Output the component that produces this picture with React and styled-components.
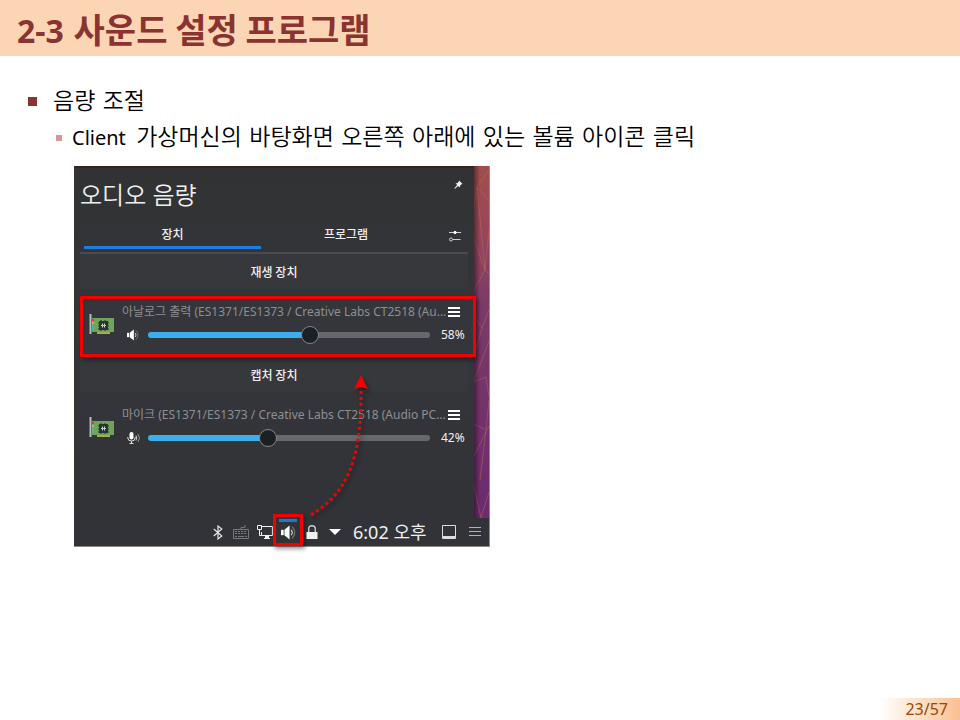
import React, { useState } from "react";
import styled, { createGlobalStyle } from "styled-components";

const GlobalStyle = createGlobalStyle`
  * { box-sizing: border-box; }
  body {
    margin: 0;
    background: #fff;
    font-family: "Noto Sans", "Noto Sans CJK KR", sans-serif;
  }
  button { border: 0; padding: 0; background: none; color: inherit; font: inherit; cursor: pointer; }
`;

const Slide = styled.div`
  min-height: 100vh;
  display: flex;
  flex-direction: column;
`;

const SlideHeader = styled.header`
  background: #fcd5b5;
  padding: 5px 17px 3px;
`;

const SlideTitle = styled.h1`
  margin: 0;
  color: #8b3331;
  font-family: "Noto Sans CJK KR", sans-serif;
  font-size: 34px;
  line-height: 48px;
  font-weight: 700;
`;

const SlideNumber = styled.span`
  margin-right: 2px;
  font-family: "Noto Sans", sans-serif;
  font-size: 32px;
  line-height: 1;
`;

const Outline = styled.main`
  flex: 1;
  padding: 27px 28px 16px;
  color: #000;
`;

const Topic = styled.h2`
  margin: 0;
  display: flex;
  align-items: center;
  gap: 16px;
  font-family: "DejaVu Sans", "Noto Sans CJK KR", sans-serif;
  font-size: 23px;
  line-height: 36px;
  font-weight: 350;
`;

const Point = styled.p`
  margin: 0;
  padding-left: 28px;
  display: flex;
  align-items: center;
  gap: 10px;
  font-family: "DejaVu Sans", "Noto Sans CJK KR", sans-serif;
  font-size: 23px;
  line-height: 36px;
  font-weight: 350;
`;

const Bullet = styled.span`
  flex: none;
  width: ${(p) => (p.$minor ? 6 : 9)}px;
  height: ${(p) => (p.$minor ? 6 : 9)}px;
  background: ${(p) => (p.$minor ? "#d99694" : "#8b3331")};
`;

const Latin = styled.span`
  margin-right: 3px;
  font-family: "Noto Sans", sans-serif;
  font-size: 20px;
  font-weight: 400;
`;

const Desktop = styled.section`
  position: relative;
  width: 416px;
  max-width: 100%;
  margin: 10px 0 0 46px;
  border: solid #8c8c8c;
  border-width: 0 1px 1px 0;
  background: #323336;
  color: #eff0f1;
`;

const Workspace = styled.div`
  display: grid;
  grid-template-columns: 1fr 15px;
  height: 352px;
`;

const Applet = styled.div`
  padding: 0 6px 0 4px;
  border: solid;
  border-width: 2px 0 0 2px;
  border-color: #35241d #35241d #35241d #3b302c;
  background: linear-gradient(#303233, #35363b 45%, #323337);
`;

const AppletHeader = styled.div`
  display: flex;
  justify-content: space-between;
  align-items: flex-start;
  height: 52px;
  padding-top: 9px;
`;

const AppletTitle = styled.h3`
  margin: 0;
  font-size: 24px;
  line-height: 36px;
  font-weight: 350;
`;

const PinButton = styled.button`
  display: flex;
  width: 20px;
  height: 14px;
  justify-content: center;
  align-items: center;
`;

const TabBar = styled.div`
  display: grid;
  grid-template-columns: 25fr 24fr 37px;
  height: 34px;
  padding-left: 4px;
  border-bottom: 2px solid #4a4b4e;
`;

const Tab = styled.button`
  display: flex;
  align-items: center;
  justify-content: center;
  height: 29px;
  padding-top: 2px;
  border-bottom: 3px solid ${(p) => (p.$active ? "#1d80e0" : "transparent")};
  font-size: 12px;
  line-height: 16px;
  font-weight: 500;
  font-family: "Noto Sans CJK KR", sans-serif;
`;

const IconButton = styled.button`
  display: flex;
  align-items: center;
  justify-content: center;
`;

const SettingsButton = styled(IconButton)`
  justify-content: flex-end;
  padding-right: 7px;
`;

const Group = styled.section`
  display: grid;
  gap: 7px;
`;

const GroupTitle = styled.h4`
  margin: 0;
  height: 35px;
  display: flex;
  align-items: center;
  justify-content: center;
  background: #37383c;
  font-family: "Noto Sans CJK KR", sans-serif;
  font-size: 12px;
  line-height: 16px;
  font-weight: 500;
`;

const Device = styled.div`
  position: relative;
  z-index: 1;
  display: grid;
  grid-template-columns: 26px 1fr;
  gap: 7px;
  align-items: center;
  align-content: start;
  height: 61px;
  margin-right: -8px;
  padding: 2px 1px 0 6px;
  border: 3px solid ${(p) => (p.$marked ? "#f40000" : "transparent")};
  box-shadow: ${(p) => (p.$marked ? "2px 3px 4px rgba(0,0,0,.4)" : "none")};
`;

const DeviceBody = styled.div`
  display: grid;
  gap: 1px;
  min-width: 0;
`;

const DeviceTop = styled.div`
  display: flex;
  justify-content: space-between;
  align-items: center;
  height: 22px;
  padding-right: 12px;
`;

const DeviceName = styled.label`
  font-size: 12px;
  line-height: 20px;
  color: #8d8f91;
  white-space: nowrap;
`;

const Level = styled.div`
  display: grid;
  grid-template-columns: 16px 1fr 37px;
  gap: 5px;
  align-items: center;
  height: 22px;
  padding-left: 5px;
`;

const Percent = styled.output`
  padding-left: 6px;
  font-size: 12px;
  line-height: 20px;
`;

const Slider = styled.input`
  appearance: none;
  width: 100%;
  height: 20px;
  margin: 0;
  background: transparent;
  &::-webkit-slider-runnable-track {
    height: 6px;
    border-radius: 3px;
    background: linear-gradient(to right, #3daee9 ${(p) => p.value}%, #67686b ${(p) => p.value}%);
  }
  &::-webkit-slider-thumb {
    appearance: none;
    width: 18px;
    height: 18px;
    margin-top: -6px;
    border: 1px solid #85878a;
    border-radius: 50%;
    background: #1b2024;
  }
`;

const Wallpaper = styled.svg`
  display: block;
  width: 100%;
  height: 100%;
`;

const Taskbar = styled.footer`
  display: flex;
  align-items: center;
  height: 28px;
  padding: 0 8px 0 132px;
  background: #323338;
`;

const Tray = styled.div`
  display: grid;
  grid-template-columns: repeat(6, 1fr);
  width: 141px;
  height: 28px;
`;

const TrayButton = styled.button`
  position: relative;
  display: flex;
  align-items: center;
  justify-content: center;
`;

const Marker = styled.span`
  position: absolute;
  top: -4px;
  left: 50%;
  width: 30px;
  height: 32px;
  margin-left: -15px;
  border: 3px solid #f40000;
  box-shadow: 2px 3px 4px rgba(0, 0, 0, 0.4);
  &::before {
    content: "";
    display: block;
    height: 3px;
    margin: 2px 3px 0;
    background: #1d78d0;
  }
`;

const Clock = styled.time`
  flex: 1;
  padding-left: 6px;
  font-size: 18px;
  line-height: 26px;
  white-space: nowrap;
`;

const TaskbarEnd = styled.div`
  display: flex;
  align-items: center;
  gap: 12px;
`;

const Arrow = styled.svg`
  position: absolute;
  z-index: 2;
  left: 226px;
  top: 205px;
  pointer-events: none;
  filter: drop-shadow(2px 3px 2px rgba(0, 0, 0, 0.45));
`;

const PageFooter = styled.footer`
  display: flex;
  justify-content: flex-end;
`;

const PageNumber = styled.span`
  width: 80px;
  padding-right: 12px;
  text-align: right;
  font-size: 16px;
  line-height: 22px;
  color: #984807;
  background: linear-gradient(to right, #fff, #fac090);
`;

const PinIcon = () => (
  <svg width="9" height="9" viewBox="0 0 9 9" fill="#f2f2f2">
    <path d="M5 0.5 8.6 4 7.5 4.3 6 5.8 5.8 7.6 4.1 6 1 8.8 0.3 8.2 3.2 5 1.5 3.3 3.3 3.2 4.8 1.6Z" />
  </svg>
);

const MixerIcon = () => (
  <svg width="12" height="12" viewBox="0 0 12 12" stroke="#cfd0d1" fill="none">
    <path d="M0 2.5h12M3.5 9.5h8" />
    <circle cx="6" cy="2.5" r="1.2" fill="#fff" stroke="#fff" />
    <circle cx="2" cy="9.5" r="1.5" />
  </svg>
);

const MenuIcon = ({ dim }) => (
  <svg width="12" height="10" viewBox="0 0 12 10" fill={dim ? "#b0b1b3" : "#fff"}>
    <path d={dim ? "M0 0h12v1H0zM0 4h12v1H0zM0 8h12v1H0z" : "M0 0h12v2H0zM0 4h12v2H0zM0 8h12v2H0z"} />
  </svg>
);

const CardIcon = () => (
  <svg width="26" height="20" viewBox="0 0 26 20">
    <path d="M3 4h22v14h-4v2h-13v-2H3Z" fill="#6fa556" />
    <path d="M8 18h13v2H8Z" fill="#9fae58" />
    <path d="M10 7h9v9H10Z" fill="#2b3432" />
    <path d="M9 9h1M9 12h1M9 15h1M19 9h1M19 12h1M19 15h1M12 6v1M16 6v1M12 16v1M16 16v1" stroke="#2b3432" />
    <path d="M12 11.5h5M13.5 9.5v4M15.5 9.5v4" stroke="#c9d0cf" />
    <path d="M1.5 0v20" stroke="#b9bec2" strokeWidth="2" />
    <path d="M0 5h1M0 8h1M0 11h1M0 14h1" stroke="#666c70" />
    <path d="M3 5h2v2H3Z" fill="#d8345f" />
    <path d="M3 8h2v2H3Z" fill="#eaa63a" />
    <path d="M3 11h2v2H3Z" fill="#3daee9" />
    <path d="M3 14h2v2H3Z" fill="#49bc9b" />
  </svg>
);

const SpeakerIcon = ({ size = 12 }) => (
  <svg width={size} height={size} viewBox="0 0 14 14" fill="none">
    <path d="M0 4.5h2.5v5H0Z" fill="#fff" />
    <path d="M3.2 4.5 8 .5v13L3.2 9.5Z" fill="#fff" />
    <path d="M9.5 4.5q2 2.5 0 5" stroke="#e1e2e3" />
    <path d="M10.3 1.5q5 5.5 0 11" stroke="#77797c" />
  </svg>
);

const MicIcon = () => (
  <svg width="14" height="12" viewBox="0 0 14 12" fill="none">
    <rect x="2.5" y="0" width="4" height="7.5" rx="2" fill="#fff" />
    <path d="M.8 5v1q0 3 3.7 3T8.2 6V5M4.5 9v3M2.5 11.5h4" stroke="#ddd" />
    <path d="M9 3.5q1.5 2.5 0 5" stroke="#d0d0d0" />
    <path d="M11 2q3 4 0 8" stroke="#8b8d90" />
  </svg>
);

const BluetoothIcon = () => (
  <svg width="10" height="15" viewBox="0 0 10 15" fill="none" stroke="#e4e5e6" strokeWidth="1.2">
    <path d="M.8 4 8.8 11 5 14V1L8.8 4 .8 11" />
  </svg>
);

const KeyboardIcon = () => (
  <svg width="16" height="14" viewBox="0 0 16 14" fill="none" stroke="#76777a">
    <path d="M.5 4.5h15v9H.5ZM8 4V2.5h4V0" />
    <path d="M2 6.5h12M2 8.5h12" strokeDasharray="2 1" />
    <path d="M2 11.5h2M5 11.5h6M12 11.5h2" />
  </svg>
);

const NetworkIcon = () => (
  <svg width="16" height="15" viewBox="0 0 16 15" fill="none" stroke="#f0f0f0">
    <path d="M5 1.5h10.4v9H4.5V7" />
    <path d="M.5.5h4v4h-4ZM2.5 4.5v6h2M7 13.5h6" />
    <path d="M8.5 11h3v2h-3Z" fill="#f0f0f0" />
  </svg>
);

const LockIcon = () => (
  <svg width="12" height="14" viewBox="0 0 12 14" fill="none">
    <path d="M0.5 7h11v7h-11Z" fill="#f0f0f0" />
    <path d="M2.7 7V4q0-3.3 3.3-3.3T9.3 4v3" stroke="#c9cacb" strokeWidth="1.4" />
  </svg>
);

const CaretIcon = () => (
  <svg width="12" height="6" viewBox="0 0 12 6"><path d="M0 0h12L6 6Z" fill="#fff" /></svg>
);

const ShowDesktopIcon = () => (
  <svg width="16" height="16" viewBox="0 0 16 16" fill="none" stroke="#dcdddd">
    <path d="M1.5 1.5h13v13h-13Z" />
    <path d="M1 13h14" strokeWidth="2" />
  </svg>
);

function DeviceRow({ id, name, initial, icon, marked }) {
  const [value, setValue] = useState(initial);
  return (
    <Device $marked={marked}>
      <CardIcon />
      <DeviceBody>
        <DeviceTop>
          <DeviceName htmlFor={id}>{name}</DeviceName>
          <IconButton aria-label="메뉴"><MenuIcon /></IconButton>
        </DeviceTop>
        <Level>
          {icon}
          <Slider id={id} type="range" min="0" max="100" value={value} onChange={(e) => setValue(Number(e.target.value))} />
          <Percent htmlFor={id}>{value}%</Percent>
        </Level>
      </DeviceBody>
    </Device>
  );
}

export default function App() {
  return (
    <Slide>
      <GlobalStyle />
      <SlideHeader>
        <SlideTitle><SlideNumber>2-3</SlideNumber> 사운드 설정 프로그램</SlideTitle>
      </SlideHeader>
      <Outline>
        <Topic><Bullet />음량 조절</Topic>
        <Point>
          <Bullet $minor />
          <span><Latin>Client</Latin> 가상머신의 바탕화면 오른쪽 아래에 있는 볼륨 아이콘 클릭</span>
        </Point>
        <Desktop>
          <Workspace>
            <Applet>
              <AppletHeader>
                <AppletTitle>오디오 음량</AppletTitle>
                <PinButton aria-label="고정"><PinIcon /></PinButton>
              </AppletHeader>
              <TabBar>
                <Tab $active>장치</Tab>
                <Tab>프로그램</Tab>
                <SettingsButton aria-label="설정"><MixerIcon /></SettingsButton>
              </TabBar>
              <Group>
                <GroupTitle>재생 장치</GroupTitle>
                <DeviceRow id="output" marked initial={58} icon={<SpeakerIcon />}
                  name="아날로그 출력 (ES1371/ES1373 / Creative Labs CT2518 (Au..." />
              </Group>
              <Group>
                <GroupTitle>캡처 장치</GroupTitle>
                <DeviceRow id="input" initial={42} icon={<MicIcon />}
                  name="마이크 (ES1371/ES1373 / Creative Labs CT2518 (Audio PC..." />
              </Group>
            </Applet>
            <Wallpaper viewBox="0 0 15 352" preserveAspectRatio="none">
              <defs>
                <linearGradient id="dusk" x1="0" y1="0" x2="0" y2="1">
                  <stop offset="0" stopColor="#a04f4d" />
                  <stop offset=".2" stopColor="#96455c" />
                  <stop offset=".4" stopColor="#7b3a68" />
                  <stop offset="1" stopColor="#6c2a70" />
                </linearGradient>
                <linearGradient id="edge">
                  <stop offset="0" stopColor="#000" stopOpacity=".4" />
                  <stop offset=".4" stopColor="#000" stopOpacity="0" />
                </linearGradient>
              </defs>
              <path d="M0 0h15v352H0Z" fill="url(#dusk)" />
              <path d="M0 42 3 21 15 4M3 21l12 14M3 21l8 83L0 73M11 104l4-40M11 104 0 124M11 104l4 4M0 150l8 12 7-18M8 162 0 190M15 175 0 215M0 216l12-5M12 211l3 20M0 258l12 6-6 50M12 264l3-30M0 320l7 32 8-26M0 290l15-30" fill="none" stroke="#c47a4a" strokeOpacity=".5" strokeWidth=".8" />
              <path d="M0 0h15v352H0Z" fill="url(#edge)" />
            </Wallpaper>
          </Workspace>
          <Taskbar>
            <Tray>
              <TrayButton aria-label="블루투스"><BluetoothIcon /></TrayButton>
              <TrayButton aria-label="키보드"><KeyboardIcon /></TrayButton>
              <TrayButton aria-label="네트워크"><NetworkIcon /></TrayButton>
              <TrayButton aria-label="볼륨"><SpeakerIcon size={15} /><Marker /></TrayButton>
              <TrayButton aria-label="잠금"><LockIcon /></TrayButton>
              <TrayButton aria-label="더 보기"><CaretIcon /></TrayButton>
            </Tray>
            <Clock>6:02 오후</Clock>
            <TaskbarEnd>
              <IconButton aria-label="바탕화면 보기"><ShowDesktopIcon /></IconButton>
              <IconButton aria-label="패널 메뉴"><MenuIcon dim /></IconButton>
            </TaskbarEnd>
          </Taskbar>
          <Arrow width="74" height="150" viewBox="0 0 74 150" fill="none">
            <path d="M11 144C46 123 62 90 61 18" stroke="#f40000" strokeWidth="3" strokeDasharray="3 3" />
            <path d="M61 4l7 14-7-2-7 2Z" fill="#f40000" />
          </Arrow>
        </Desktop>
      </Outline>
      <PageFooter><PageNumber>23/57</PageNumber></PageFooter>
    </Slide>
  );
}
